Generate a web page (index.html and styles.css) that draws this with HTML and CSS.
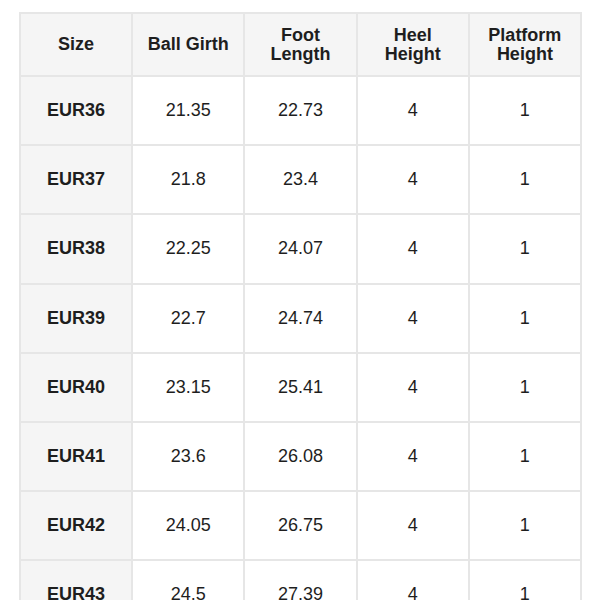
FILE: index.html
```html
<!DOCTYPE html>
<html>
<head>
<meta charset="utf-8">
<link rel="stylesheet" href="styles.css">
</head>
<body>
<table class="size-table">
  <thead>
    <tr><th>Size</th><th>Ball Girth</th><th>Foot<br>Length</th><th>Heel<br>Height</th><th>Platform<br>Height</th></tr>
  </thead>
  <tbody>
    <tr><th>EUR36</th><td>21.35</td><td>22.73</td><td>4</td><td>1</td></tr>
    <tr><th>EUR37</th><td>21.8</td><td>23.4</td><td>4</td><td>1</td></tr>
    <tr><th>EUR38</th><td>22.25</td><td>24.07</td><td>4</td><td>1</td></tr>
    <tr><th>EUR39</th><td>22.7</td><td>24.74</td><td>4</td><td>1</td></tr>
    <tr><th>EUR40</th><td>23.15</td><td>25.41</td><td>4</td><td>1</td></tr>
    <tr><th>EUR41</th><td>23.6</td><td>26.08</td><td>4</td><td>1</td></tr>
    <tr><th>EUR42</th><td>24.05</td><td>26.75</td><td>4</td><td>1</td></tr>
    <tr><th>EUR43</th><td>24.5</td><td>27.39</td><td>4</td><td>1</td></tr>
  </tbody>
</table>
</body>
</html>
```
FILE: styles.css
```css
html, body {
  margin: 0;
  padding: 0;
  background: #fff;
}
body {
  padding: 12px 0 0 19px;
  font-family: "Liberation Sans", Arial, sans-serif;
  color: #1e1e1e;
}
.size-table {
  border-collapse: collapse;
  table-layout: fixed;
  width: 563px;
  border: 2px solid #e6e6e6;
}
.size-table th,
.size-table td {
  border: 2px solid #e6e6e6;
  text-align: center;
  vertical-align: middle;
  padding: 0;
  font-size: 18px;
  line-height: 19px;
}
.size-table th {
  font-weight: bold;
  background: #f5f5f5;
}
.size-table td {
  font-weight: normal;
  background: #fff;
}
.size-table thead th {
  height: 61px;
}
.size-table tbody th,
.size-table tbody td {
  height: 67.2px;
}
```
